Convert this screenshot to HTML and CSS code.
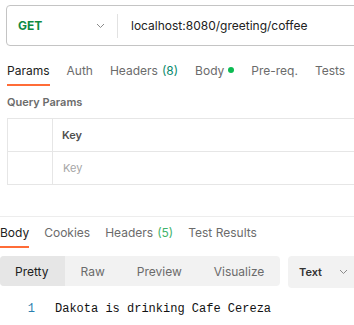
FILE: index.html
```html
<!DOCTYPE html>
<html lang="en">
<head>
<meta charset="UTF-8" />
<meta name="viewport" content="width=device-width, initial-scale=1" />
<title>Request</title>
<link rel="stylesheet" href="styles.css">
</head>
<body>

<div class="request-bar">
  <div class="method">
    <span class="method-name">GET</span>
    <svg class="chevron" width="9" height="6" viewBox="0 0 9 6"><path d="M1 1l3.5 3.5L8 1" fill="none" stroke="#8a8a8a" stroke-width="1"/></svg>
  </div>
  <div class="divider"></div>
  <div class="url">localhost:8080/greeting/coffee</div>
</div>

<div class="tabs req-tabs">
  <div class="tab active">Params</div>
  <div class="tab">Auth</div>
  <div class="tab">Headers <span class="count">(8)</span></div>
  <div class="tab">Body <span class="dot"></span></div>
  <div class="tab">Pre-req.</div>
  <div class="tab">Tests</div>
</div>

<div class="section-title">Query Params</div>

<div class="params-table">
  <div class="row head">
    <div class="cell check"></div>
    <div class="cell key">Key</div>
  </div>
  <div class="row">
    <div class="cell check"></div>
    <div class="cell key placeholder">Key</div>
  </div>
</div>

<div class="response">
  <div class="tabs res-tabs">
    <div class="tab active">Body</div>
    <div class="tab">Cookies</div>
    <div class="tab">Headers <span class="count light">(5)</span></div>
    <div class="tab">Test Results</div>
  </div>

  <div class="toolbar">
    <div class="segments">
      <div class="seg selected">Pretty</div>
      <div class="seg">Raw</div>
      <div class="seg">Preview</div>
      <div class="seg">Visualize</div>
    </div>
    <div class="format">
      <span>Text</span>
      <svg class="chevron" width="9" height="6" viewBox="0 0 9 6"><path d="M1 1l3.5 3.5L8 1" fill="none" stroke="#8a8a8a" stroke-width="1"/></svg>
    </div>
  </div>

  <div class="code">
    <span class="ln">1</span>
    <span class="line">Dakota is drinking Cafe Cereza</span>
  </div>
</div>

</body>
</html>
```

FILE: styles.css
```css
body {
  margin: 0;
  font-family: Inter, "Noto Sans", sans-serif;
  font-size: 12px;
  color: #212121;
  background: #fff;
  overflow: hidden;
  width: 354px;
  height: 325px;
}
.request-bar {
  margin: 5px -20px 0 6px;
  height: 39px;
  border: 1px solid #c4c4c4;
  border-radius: 4px;
  display: flex;
  align-items: center;
}
.method {
  display: flex;
  align-items: center;
  justify-content: space-between;
  padding: 0 12px 0 11px;
  box-sizing: border-box;
  width: 110px;
}
.method-name {
  font-weight: 700;
  color: #0f8a43;
  font-size: 12px;
}
.divider {
  width: 1px;
  height: 24px;
  background: #e2e2e2;
}
.url {
  padding-left: 13px;
  color: #212121;
}
.tabs {
  display: flex;
  gap: 17px;
  height: 30px;
  align-items: stretch;
}
.req-tabs {
  margin: 10px 0 0 7px;
}
.tab {
  display: flex;
  align-items: center;
  color: #6b6b6b;
  border-bottom: 2px solid transparent;
  white-space: nowrap;
}
.tab.active {
  color: #212121;
  border-bottom-color: #ff6c37;
}
.count {
  color: #0a8a6c;
  margin-left: 4px;
}
.count.light {
  color: #3fb36b;
}
.dot {
  width: 6px;
  height: 6px;
  border-radius: 50%;
  background: #0cbb52;
  margin-left: 4px;
}
.section-title {
  margin: 9px 0 0 7px;
  font-size: 11px;
  font-weight: 600;
  color: #6b6b6b;
}
.params-table {
  margin: 9px -20px 0 7px;
  border: 1px solid #e6e6e6;
  border-bottom: none;
}
.row {
  display: flex;
  height: 32px;
  border-bottom: 1px solid #e6e6e6;
}
.cell.check {
  width: 44px;
  border-right: 1px solid #e6e6e6;
}
.cell.key {
  padding-left: 9px;
  display: flex;
  align-items: center;
  font-size: 11px;
  font-weight: 600;
  color: #505050;
}
.cell.key.placeholder {
  font-weight: 400;
  color: #a6a6a6;
  padding-left: 10px;
}
.response {
  margin-top: 31px;
  border-top: 1px solid #ededed;
}
.res-tabs {
  margin-top: 1px;
  gap: 15px;
}
.toolbar {
  display: flex;
  gap: 8px;
  margin-top: 8px;
  height: 30px;
}
.segments {
  display: flex;
  width: 280px;
  background: #f2f2f2;
  border-radius: 4px;
  overflow: hidden;
}
.seg {
  display: flex;
  align-items: center;
  padding: 0 16px;
  color: #6b6b6b;
}
.seg.selected {
  background: #e6e6e6;
  color: #212121;
  padding: 0 16px 0 15px;
}
.format {
  flex: 1;
  margin-right: -10px;
  background: #f2f2f2;
  border-radius: 4px;
  display: flex;
  align-items: center;
  padding-left: 11px;
  gap: 17px;
  font-size: 11px;
  font-weight: 600;
  color: #333;
  height: 32px;
}
.code {
  margin-top: 16px;
  display: flex;
  font-family: "Liberation Mono", "DejaVu Sans Mono", monospace;
  font-size: 12px;
}
.ln {
  width: 35px;
  text-align: right;
  color: #2a7fb0;
  padding-right: 20px;
}
.line {
  color: #111;
}
```
